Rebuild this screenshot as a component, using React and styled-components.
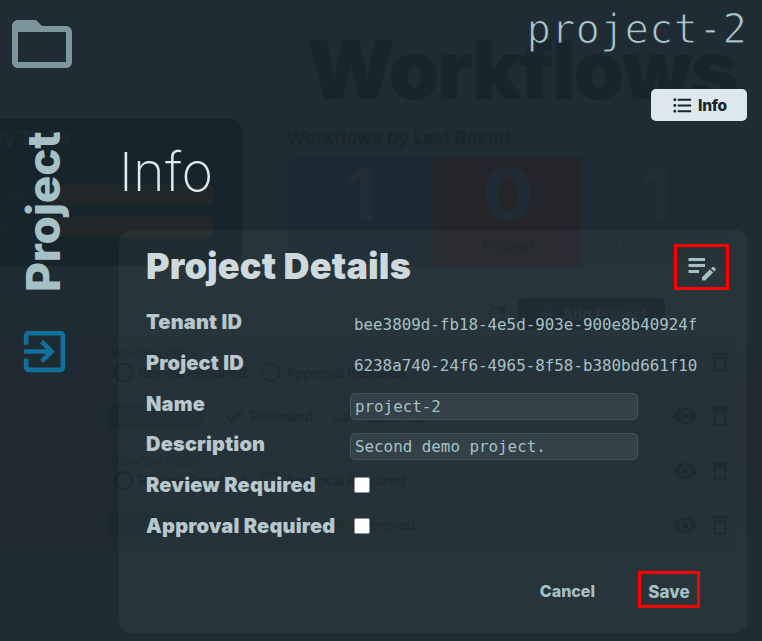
import React from "react";
import styled, { createGlobalStyle } from "styled-components";
import {
  MdFolderOpen, MdExitToApp, MdEditNote, MdFormatListBulleted, MdRefresh, MdAdd,
  MdCheck, MdDoneAll, MdVisibility, MdDeleteOutline, MdRadioButtonUnchecked,
} from "react-icons/md";

const Global = createGlobalStyle`
  * { box-sizing: border-box; }
  body { margin: 0; background: #202c33; font-family: Inter, sans-serif; overflow: hidden; }
  svg { display: block; flex: none; }
`;

const Screen = styled.div`
  display: grid;
  width: 762px;
  height: 641px;
  overflow: hidden;
  background: #202c33;
`;

/* dimmed workflows page behind the dialog */
const Backdrop = styled.div`
  grid-area: 1 / 1;
  width: 762px;
  height: 641px;
  padding-top: 30px;
  color: #1a252d;
  background: linear-gradient(#202c33 0 337px, #202a32 400px, #202c33 560px);
`;
const PageTitle = styled.div`
  height: 89px;
  padding-left: 307px;
  font-size: 81px;
  line-height: 81px;
  font-weight: 900;
  letter-spacing: -1.9px;
  color: #19252c;
  white-space: nowrap;
`;
const Charts = styled.div`
  display: grid;
  grid-template-columns: 242px 442px;
  column-gap: 45px;
  height: 147px;
`;
const BarPanel = styled.div`
  height: 147px;
  padding-top: 8px;
  background: #18242c;
  border-radius: 0 12px 12px 0;
  overflow: hidden;
`;
const PanelTitle = styled.div`
  width: 71px;
  height: 22px;
  display: flex;
  justify-content: flex-end;
  font-size: 18px;
  line-height: 22px;
  font-weight: 700;
  white-space: nowrap;
  color: #1e2a32;
`;
const ResultsTitle = styled.div`
  height: 22px;
  font-size: 18px;
  line-height: 22px;
  font-weight: 700;
  letter-spacing: 0.05px;
  white-space: nowrap;
  color: #1a252d;
`;
const BarRow = styled.div`
  display: grid;
  grid-template-columns: 30px 163px;
  column-gap: 20px;
  height: 20px;
  margin-top: ${(p) => p.$gap};
  align-items: center;
`;
const BarLabel = styled.div`
  display: flex;
  justify-content: flex-end;
  font-size: 10px;
  white-space: nowrap;
  color: #1e2930;
`;
const Bar = styled.div`
  height: 20px;
  border-radius: 0 3px 3px 0;
  background: #222829;
`;
const Results = styled.div`
  padding-top: 8px;
`;
const StatGroup = styled.div`
  display: grid;
  grid-template-columns: repeat(3, 1fr);
  height: 108px;
  margin-top: 9px;
  border-radius: 12px;
  overflow: hidden;
`;
const Stat = styled.div`
  display: flex;
  flex-direction: column;
  align-items: center;
  background: ${(p) => p.$bg};
  color: ${(p) => p.$fg};
`;
const StatValue = styled.div`
  height: 78px;
  font-size: 73px;
  line-height: 73px;
  font-weight: 800;
`;
const StatLabel = styled.div`
  font-size: 18px;
  line-height: 22px;
  font-weight: 800;
  letter-spacing: -0.1px;
  color: ${(p) => p.$color};
`;
const Tools = styled.div`
  display: flex;
  align-items: center;
  justify-content: flex-end;
  gap: 9px;
  height: 32px;
  margin: 32px 97px 7px 0;
`;
const AddButton = styled.div`
  display: flex;
  align-items: center;
  gap: 6px;
  width: 147px;
  height: 32px;
  padding-left: 18px;
  border-radius: 6px;
  background: #19242c;
  color: #212d35;
  font-size: 15px;
  font-weight: 700;
  white-space: nowrap;
`;
const WorkflowRow = styled.div`
  display: flex;
  align-items: center;
  height: 50px;
  width: 736px;
  margin-bottom: 4.3px;
  padding: 0 3px 0 108px;
  border-radius: 6px;
  background: #1f2a32;
  font-size: 14px;
  font-weight: 600;
  letter-spacing: -0.3px;
  color: #18232b;
`;
const Policy = styled.div`
  width: 540px;
  padding: 6px 0 0 4px;
`;
const PolicyTitle = styled.div`
  font-size: 11.5px;
  line-height: 14px;
  font-weight: 400;
  letter-spacing: -0.1px;
  height: 14px;
`;
const Flags = styled.div`
  display: flex;
  align-items: center;
  gap: ${(p) => p.$gap};
  width: ${(p) => p.$width};
  white-space: nowrap;
`;
const Flag = styled.div`
  display: flex;
  align-items: center;
  gap: ${(p) => p.$gap};
`;
const Pill = styled.div`
  width: ${(p) => p.$width};
  height: 25px;
  padding-left: 10px;
  border-radius: 5px;
  background: #1b272e;
  color: #1e2a32;
  font-family: ${(p) => p.$font || "Inter"}, sans-serif;
  font-size: 15.5px;
  line-height: 25px;
  font-weight: 700;
`;
const RowActions = styled.div`
  display: flex;
  align-items: center;
  gap: 9px;
  margin-left: auto;
`;

/* dialog layer */
const Overlay = styled.div`
  grid-area: 1 / 1;
  z-index: 1;
  display: grid;
  grid-template-columns: 119px 628px;
  width: 762px;
  height: 641px;
`;
const Side = styled.div`
  display: flex;
  flex-direction: column;
  align-items: flex-start;
  padding: 8px 0 0 6px;
  color: #7d969b;
`;
const SideTitle = styled.div`
  writing-mode: vertical-rl;
  transform: rotate(180deg);
  height: 162px;
  width: 54px;
  margin: 50px 0 0 10px;
  font-size: 46px;
  line-height: 54px;
  font-weight: 800;
  letter-spacing: -0.2px;
  color: #a6c1c6;
`;
const ExitIcon = styled(MdExitToApp)`
  margin: 32px 0 0 11px;
  color: #11719b;
`;
const Main = styled.div`
  display: flex;
  flex-direction: column;
`;
const ProjectName = styled.div`
  align-self: flex-end;
  height: 89px;
  padding-top: 5px;
  font-family: "DejaVu Sans Mono", monospace;
  font-size: 40.7px;
  line-height: 48px;
  -webkit-text-stroke: 1.2px #202c33;
  color: #abc7cc;
`;
const InfoButton = styled.button`
  align-self: flex-end;
  display: flex;
  align-items: center;
  gap: 4px;
  width: 96px;
  height: 32px;
  padding: 0 0 0 20px;
  border: 0;
  border-radius: 5px;
  background: #dde8ec;
  color: #18242c;
  font-family: Inter, sans-serif;
  font-size: 15.5px;
  font-weight: 800;
  letter-spacing: -0.3px;
`;
const InfoTitle = styled.div`
  height: 109px;
  padding: 18px 0 0 0;
  font-size: 54px;
  line-height: 66px;
  font-weight: 200;
  letter-spacing: 0.3px;
  color: #e0ebee;
`;
const Card = styled.div`
  height: 403px;
  padding: 14px 18px 0 27px;
  border-radius: 12px;
  background: rgba(200, 225, 230, 0.045);
`;
const CardHeader = styled.div`
  display: flex;
  justify-content: space-between;
  height: 59px;
`;
const CardTitle = styled.div`
  font-size: 36px;
  line-height: 44px;
  font-weight: 900;
  letter-spacing: 0.15px;
  color: #cdd9dd;
  white-space: nowrap;
`;
const Marked = styled.div`
  display: flex;
  align-items: center;
  justify-content: center;
  width: ${(p) => p.$width};
  height: ${(p) => p.$height};
  padding-top: ${(p) => p.$drop};
  border: 3px solid #f00;
  color: #a6c1c6;
`;
const Form = styled.div`
  display: grid;
  grid-template-columns: 204px 1fr;
  grid-auto-rows: 40.8px;
`;
const Label = styled.label`
  font-size: 20px;
  line-height: 38px;
  font-weight: 900;
  letter-spacing: 0.18px;
  color: #b8c7cb;
  white-space: nowrap;
`;
const Value = styled.div`
  padding-left: 4px;
  font-family: "DejaVu Sans Mono", monospace;
  font-size: 15.85px;
  line-height: 43px;
  color: #a6c1c6;
  white-space: nowrap;
`;
const Field = styled.input`
  display: block;
  width: 288px;
  height: 27px;
  margin-top: 8px;
  padding: 0 4px;
  border: 1px solid #46545a;
  border-radius: 5px;
  background: #344148;
  color: #a6c1c6;
  font-family: "DejaVu Sans Mono", monospace;
  font-size: 15.85px;
  outline: none;
`;
const Check = styled.input`
  appearance: none;
  display: block;
  width: 16px;
  height: 16px;
  margin: 11px 0 0 4px;
  border: 1px solid #8f8f9d;
  border-radius: 2px;
  background: #fff;
`;
const Actions = styled.div`
  display: flex;
  justify-content: flex-end;
  align-items: center;
  gap: 43px;
  height: 37px;
  margin: 23px 29px 0 0;
`;
const TextButton = styled.span`
  padding-top: ${(p) => p.$drop};
  font-size: ${(p) => p.$size};
  font-weight: 800;
  color: #a6c1c6;
`;

function RowIcons() {
  return (
    <RowActions>
      <MdVisibility size={26} />
      <MdDeleteOutline size={26} />
    </RowActions>
  );
}
function OpenRow() {
  return (
    <WorkflowRow>
      <Policy>
        <PolicyTitle>Workflow Policy</PolicyTitle>
        <Flags $gap="13px">
          <Flag $gap="3px"><MdRadioButtonUnchecked size={23} />Review Required</Flag>
          <Flag $gap="3px"><MdRadioButtonUnchecked size={23} />Approval Required</Flag>
        </Flags>
      </Policy>
      <RowIcons />
    </WorkflowRow>
  );
}
function StateRow({ label, width, font }) {
  return (
    <WorkflowRow>
      <Flags $gap="20px" $width="540px">
        <Pill $width={width} $font={font}>{label}</Pill>
        <Flag $gap="4px"><MdCheck size={24} />Reviewed</Flag>
        <Flag $gap="4px"><MdDoneAll size={24} />Approved</Flag>
      </Flags>
      <RowIcons />
    </WorkflowRow>
  );
}

export default function App() {
  return (
    <Screen>
      <Global />
      <Backdrop>
        <PageTitle>Workflows</PageTitle>
        <Charts>
          <BarPanel>
            <PanelTitle>By Tasks</PanelTitle>
            <BarRow $gap="36px"><BarLabel>demo</BarLabel><Bar /></BarRow>
            <BarRow $gap="12px"><BarLabel>project-2</BarLabel><Bar /></BarRow>
          </BarPanel>
          <Results>
            <ResultsTitle>Workflows by Last Result</ResultsTitle>
            <StatGroup>
              <Stat $bg="#1c2932" $fg="#222d36"><StatValue>1</StatValue><StatLabel $color="#1a2731">Successful</StatLabel></Stat>
              <Stat $bg="#242528" $fg="#202b34"><StatValue>0</StatValue><StatLabel $color="#1e2429">Failed</StatLabel></Stat>
              <Stat $bg="#1f2b32" $fg="#222e36"><StatValue>1</StatValue><StatLabel $color="#1d2930">Unknown</StatLabel></Stat>
            </StatGroup>
          </Results>
        </Charts>
        <Tools>
          <MdRefresh size={24} />
          <AddButton><MdAdd size={20} />Add Project</AddButton>
        </Tools>
        <OpenRow />
        <StateRow label="Disabled" width="94px" font="DejaVu Sans Mono" />
        <OpenRow />
        <StateRow label="Enabled" width="84px" />
      </Backdrop>
      <Overlay>
        <Side>
          <MdFolderOpen size={72} />
          <SideTitle>Project</SideTitle>
          <ExitIcon size={55} />
        </Side>
        <Main>
          <ProjectName>project-2</ProjectName>
          <InfoButton><MdFormatListBulleted size={23} />Info</InfoButton>
          <InfoTitle>Info</InfoTitle>
          <Card>
            <CardHeader>
              <CardTitle>Project Details</CardTitle>
              <Marked $width="55px" $height="46px"><MdEditNote size={36} /></Marked>
            </CardHeader>
            <Form>
              <Label>Tenant ID</Label>
              <Value>bee3809d-fb18-4e5d-903e-900e8b40924f</Value>
              <Label>Project ID</Label>
              <Value>6238a740-24f6-4965-8f58-b380bd661f10</Value>
              <Label>Name</Label>
              <Field defaultValue="project-2" />
              <Label>Description</Label>
              <Field defaultValue="Second demo project." />
              <Label>Review Required</Label>
              <Check type="checkbox" />
              <Label>Approval Required</Label>
              <Check type="checkbox" />
            </Form>
            <Actions>
              <TextButton $size="16px" $drop="3px">Cancel</TextButton>
              <Marked $width="62px" $height="37px" $drop="5px"><TextButton $size="17px">Save</TextButton></Marked>
            </Actions>
          </Card>
        </Main>
      </Overlay>
    </Screen>
  );
}
